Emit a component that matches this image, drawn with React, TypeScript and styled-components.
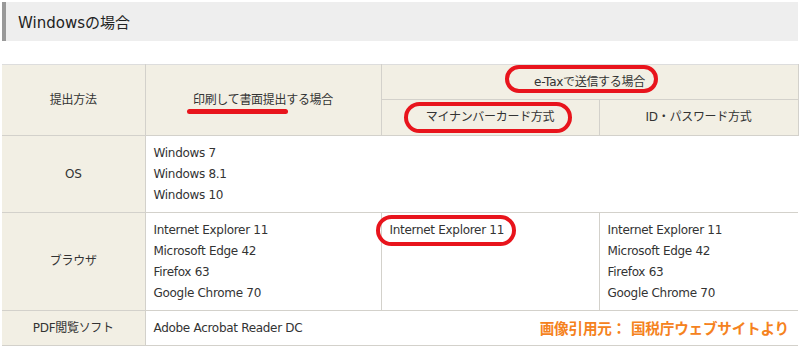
import React from "react";
import styled, { createGlobalStyle } from "styled-components";

const GlobalStyle = createGlobalStyle`
  body {
    margin: 0;
    background: #fff;
    font-family: "DejaVu Sans", "Noto Sans CJK JP", sans-serif;
    color: #333;
  }
`;

interface Mark {
  $top: number;
  $right: number;
  $bottom: number;
  $left: number;
}

const browsers = [
  "Internet Explorer 11",
  "Microsoft Edge 42",
  "Firefox 63",
  "Google Chrome 70",
];

function App() {
  return (
    <Page>
      <GlobalStyle />
      <Title>Windowsの場合</Title>
      <Table>
        <colgroup>
          <Col $w={143} />
          <Col $w={236} />
          <Col $w={218} />
          <Col $w={199} />
        </colgroup>
        <tbody>
          <tr>
            <HeadCell rowSpan={2}>提出方法</HeadCell>
            <HeadCell rowSpan={2}>
              <Underlined>印刷して書面提出する場合</Underlined>
            </HeadCell>
            <HeadCell colSpan={2} $h={34}>
              <Circled $top={-7} $right={-13} $bottom={0} $left={-29}>
                e-Taxで送信する場合
              </Circled>
            </HeadCell>
          </tr>
          <tr>
            <HeadCell $h={35}>
              <Circled $top={-5} $right={-18} $bottom={-5} $left={-22}>
                マイナンバーカード方式
              </Circled>
            </HeadCell>
            <HeadCell $h={35}>ID・パスワード方式</HeadCell>
          </tr>
          <tr>
            <HeadCell>OS</HeadCell>
            <Cell colSpan={3}>
              <Line>Windows 7</Line>
              <Line>Windows 8.1</Line>
              <Line>Windows 10</Line>
            </Cell>
          </tr>
          <tr>
            <HeadCell>ブラウザ</HeadCell>
            <Cell>
              {browsers.map((b) => (
                <Line key={b}>{b}</Line>
              ))}
            </Cell>
            <Cell>
              <Line>
                <Circled $top={-5} $right={-12} $bottom={-5} $left={-14}>
                  Internet Explorer 11
                </Circled>
              </Line>
            </Cell>
            <Cell>
              {browsers.map((b) => (
                <Line key={b}>{b}</Line>
              ))}
            </Cell>
          </tr>
          <tr>
            <HeadCell>PDF閲覧ソフト</HeadCell>
            <Cell colSpan={3}>
              <SplitLine>
                <span>Adobe Acrobat Reader DC</span>
                <Credit>画像引用元： 国税庁ウェブサイトより</Credit>
              </SplitLine>
            </Cell>
          </tr>
        </tbody>
      </Table>
    </Page>
  );
}

export default App;

const Page = styled.div`
  width: 796px;
  padding: 2px 2px 0;
`;

const Title = styled.h2`
  margin: 0 0 23px;
  height: 39px;
  display: flex;
  align-items: center;
  padding-left: 12px;
  background: #eeeeee;
  border-left: 4px solid #999;
  font-size: 15px;
  font-weight: normal;
  color: #222;
`;

const Table = styled.table`
  width: 796px;
  table-layout: fixed;
  border-collapse: collapse;
  font-size: 12px;
  letter-spacing: -0.3px;
  line-height: 21px;
  border-top: 1px solid #dddddd;
  border-bottom: 1px solid #dddddd;
`;

const Col = styled.col<{ $w: number }>`
  width: ${(p) => p.$w}px;
`;

const HeadCell = styled.td<{ $h?: number }>`
  background: #f2efe4;
  border: 1px solid #d3d1cb;
  border-top-color: #dddddd;
  text-align: center;
  vertical-align: middle;
  padding: 0 8px;
  height: ${(p) => (p.$h ? `${p.$h}px` : "auto")};

  &:first-child {
    border-left: none;
  }
`;

const Cell = styled.td`
  background: #fff;
  border: 1px solid #d3d1cb;
  vertical-align: top;
  padding: 7px 8px 6px;

  &:last-child {
    border-right: none;
  }
`;

const Line = styled.div`
  white-space: nowrap;
`;

const SplitLine = styled.div`
  display: flex;
  justify-content: space-between;
  align-items: center;
  padding-right: 1px;
`;

const Credit = styled.span`
  color: #f58220;
  font-weight: bold;
  font-size: 14.6px;
  letter-spacing: -0.2px;
`;

const Underlined = styled.span`
  position: relative;
  display: inline-block;

  &::after {
    content: "";
    position: absolute;
    left: -6px;
    bottom: -3px;
    width: 101px;
    height: 5px;
    border-radius: 3px;
    background: #e8141c;
  }
`;

const Circled = styled.span<Mark>`
  position: relative;
  display: inline-block;

  &::after {
    content: "";
    position: absolute;
    top: ${(p) => p.$top}px;
    right: ${(p) => p.$right}px;
    bottom: ${(p) => p.$bottom}px;
    left: ${(p) => p.$left}px;
    border: 4px solid #e8141c;
    border-radius: 16px;
  }
`;
